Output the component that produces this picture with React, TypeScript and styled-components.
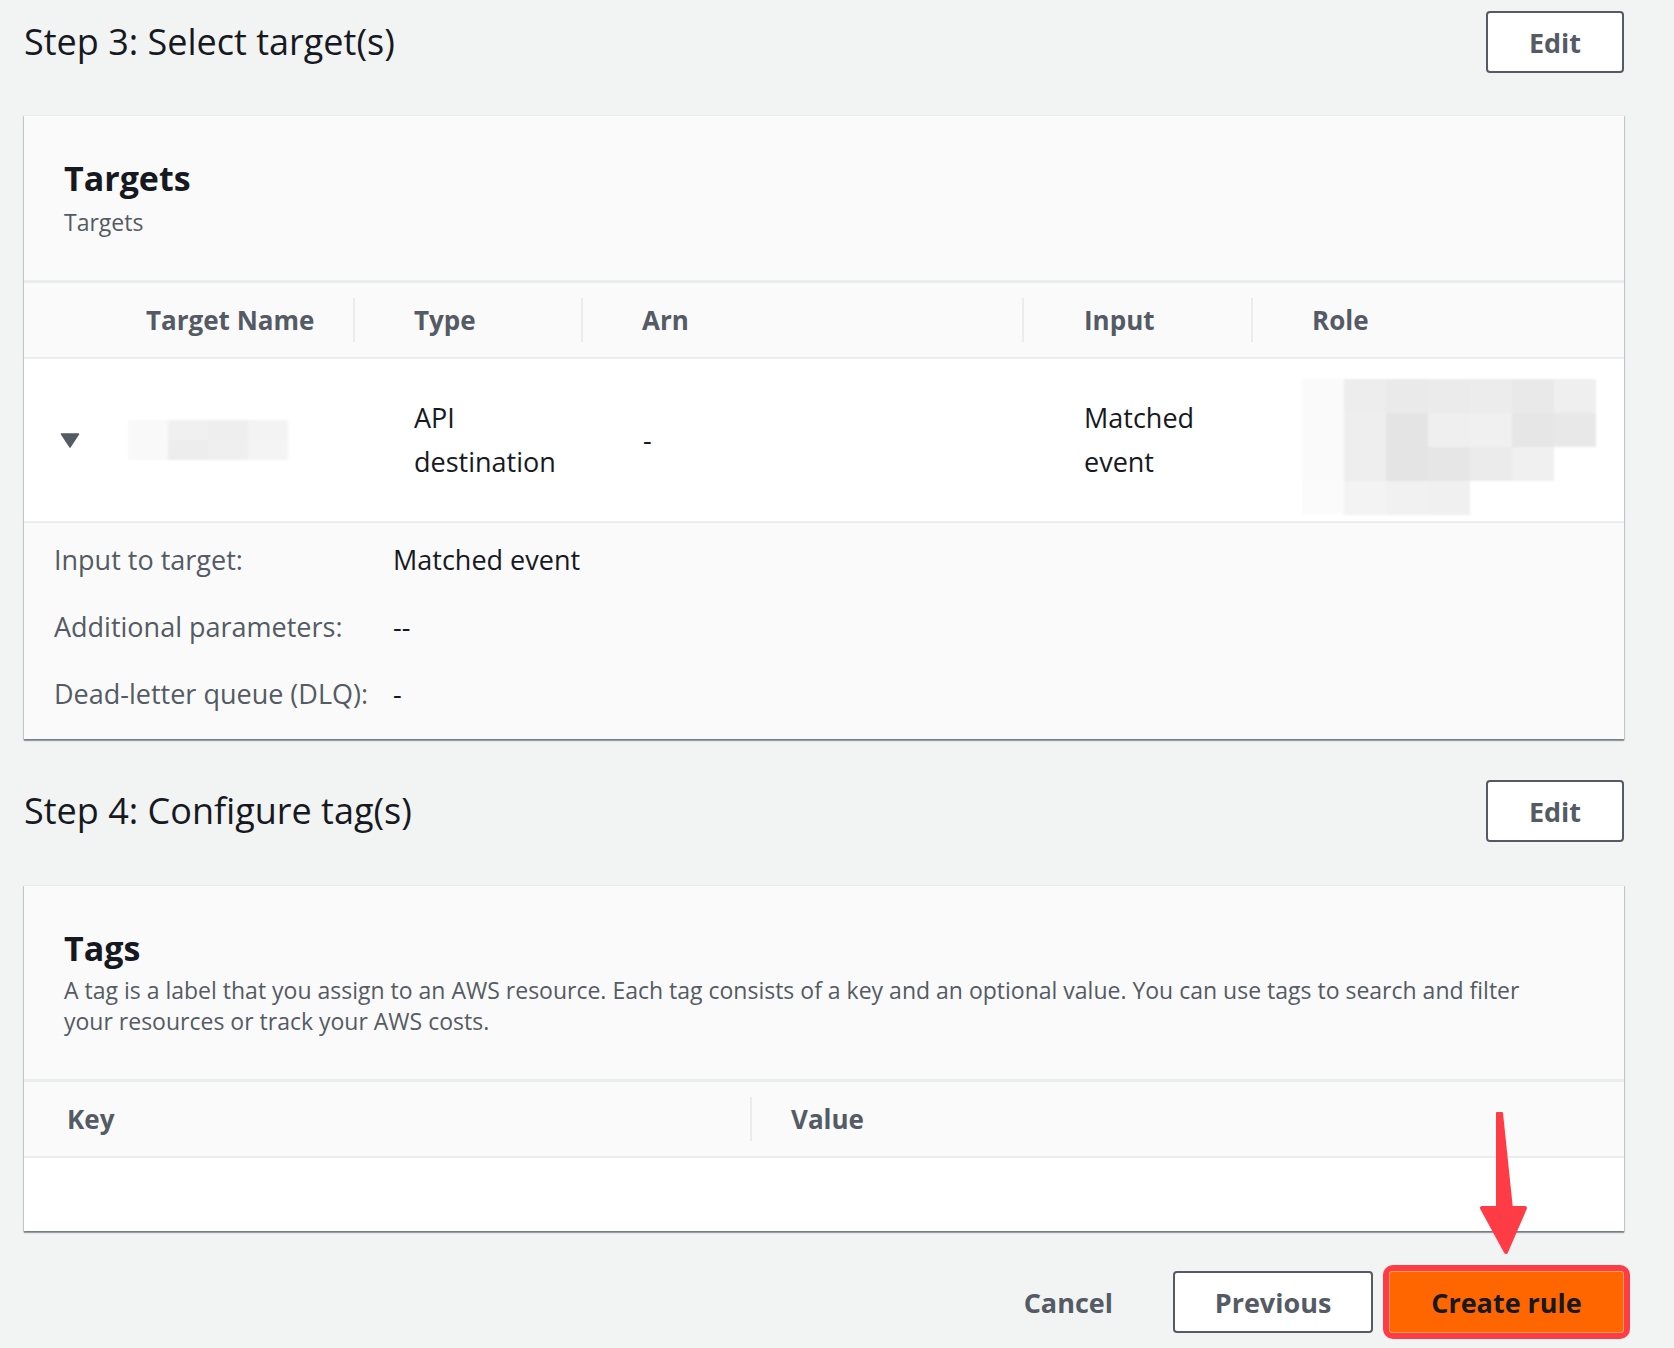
import React from "react";
import styled, { createGlobalStyle } from "styled-components";

const GlobalStyle = createGlobalStyle`
	html, body {
		margin: 0;
		padding: 0;
		background: #f2f3f3;
	}
	body {
		font-family: "Open Sans", "Liberation Sans", Arial, sans-serif;
		color: #16191f;
	}
`;

const Page = styled.div`
	padding: 11px 50px 40px 24px;
	background: #f2f3f3;
	min-height: 1297px;
`;

const StepHeader = styled.div<{ $gap?: number }>`
	display: flex;
	align-items: center;
	justify-content: space-between;
	height: 62px;
	margin-top: ${(p) => p.$gap ?? 0}px;
`;

const StepTitle = styled.h2`
	margin: 0;
	font-size: 36px;
	font-weight: 400;
	line-height: 44px;
	color: #16191f;
`;

const OutlineButton = styled.button<{ $wide?: boolean }>`
	box-sizing: border-box;
	height: 62px;
	min-width: ${(p) => (p.$wide ? "200px" : "138px")};
	padding: 0 30px;
	background: #fff;
	border: 2px solid #545b64;
	border-radius: 4px;
	font-family: inherit;
	font-size: 27px;
	font-weight: 700;
	color: #545b64;
	cursor: pointer;
`;

const Card = styled.section<{ $gap: number }>`
	margin-top: ${(p) => p.$gap}px;
	background: #fafafa;
	border-top: 1px solid #eaeded;
	box-shadow: 0 2px 1px 0 rgba(0, 28, 36, 0.35), 1px 1px 1px 0 rgba(0, 28, 36, 0.15),
		-1px 1px 1px 0 rgba(0, 28, 36, 0.15);
`;

const CardHeader = styled.div`
	padding: 42px 40px 42px;
	border-bottom: 3px solid #eaeded;
`;

const CardTitle = styled.h3`
	margin: 0;
	font-size: 34px;
	font-weight: 700;
	line-height: 40px;
	color: #16191f;
`;

const CardSubtitle = styled.p<{ $gap: number }>`
	margin: ${(p) => p.$gap}px 0 0;
	font-size: 23px;
	line-height: 31px;
	color: #545b64;
	max-width: 1490px;
`;

const TableRow = styled.div<{ $cols: string; $height: number; $bg: string; $last?: boolean }>`
	display: grid;
	grid-template-columns: ${(p) => p.$cols};
	height: ${(p) => p.$height}px;
	background: ${(p) => p.$bg};
	border-bottom: ${(p) => (p.$last ? "none" : "2px solid #eaeded")};
`;

const HeaderCell = styled.div`
	display: flex;
	align-items: center;
`;

const HeaderLabel = styled.div<{ $pad: number; $divider?: boolean }>`
	display: flex;
	align-items: center;
	height: 44px;
	padding-left: ${(p) => p.$pad}px;
	border-left: 2px solid ${(p) => (p.$divider ? "#eaeded" : "transparent")};
	font-size: 26px;
	font-weight: 700;
	color: #545b64;
`;

const BodyCell = styled.div<{ $pad: number }>`
	display: flex;
	align-items: center;
	padding-left: ${(p) => p.$pad + 2}px;
	font-size: 27px;
	line-height: 44px;
	color: #16191f;
`;

const Toggle = styled.svg`
	width: 20px;
	height: 15px;
	margin-right: 48px;
	flex: none;
`;

const Mosaic = styled.div<{ $cols: number; $w: number; $h: number; $shift?: number }>`
	display: grid;
	grid-template-columns: repeat(${(p) => p.$cols}, ${(p) => p.$w}px);
	grid-auto-rows: ${(p) => p.$h}px;
	margin-top: ${(p) => p.$shift ?? 0}px;
	filter: blur(1px);
`;

const Tile = styled.div<{ $c: string }>`
	background: ${(p) => p.$c};
`;

const Details = styled.dl`
	display: grid;
	grid-template-columns: 339px 1fr;
	grid-auto-rows: 67px;
	align-items: center;
	margin: 0;
	padding: 3px 30px 12px;
	font-size: 27px;
`;

const DetailLabel = styled.dt`
	color: #545b64;
`;

const DetailValue = styled.dd`
	margin: 0;
	color: #16191f;
`;

const Footer = styled.div`
	display: flex;
	justify-content: flex-end;
	align-items: center;
	margin-top: 40px;
`;

const LinkButton = styled.button`
	background: none;
	border: none;
	padding: 0 30px;
	margin-right: 30px;
	font-family: inherit;
	font-size: 27px;
	font-weight: 700;
	color: #545b64;
	cursor: pointer;
`;

const Highlight = styled.div`
	position: relative;
	margin: -6px -6px -6px 10px;
	border: 6px solid #ff3b45;
	border-radius: 10px;
	display: flex;
`;

const PrimaryButton = styled.button`
	box-sizing: border-box;
	height: 62px;
	width: 235px;
	background: #ff6600;
	border: 1px solid #ff9d5c;
	border-radius: 3px;
	font-family: inherit;
	font-size: 27px;
	font-weight: 700;
	color: #16191f;
	cursor: pointer;
`;

const Arrow = styled.svg`
	position: absolute;
	left: 86px;
	top: -162px;
	width: 52px;
	height: 150px;
`;

const targetCols = "329px 228px 441px 229px 1fr";
const targetHeaders: [string, number][] = [
	["Target Name", 120],
	["Type", 59],
	["Arn", 59],
	["Input", 60],
	["Role", 59],
];

const nameTiles = [
	"#f9f9f9", "#f0f0f0", "#eeeeee", "#f3f3f3",
	"#f9f9f9", "#ededed", "#efefef", "#f4f4f4",
];

const roleTiles = [
	"#fafafa", "#ededed", "#eaeaea", "#ebebeb", "#ececec", "#e9e9e9", "#efefef",
	"#fafafa", "#eeeeee", "#e4e4e4", "#efefef", "#f0f0f0", "#e6e6e6", "#e8e8e8",
	"#fafafa", "#eeeeee", "#e4e4e4", "#e6e6e6", "#ebebeb", "#f0f0f0", "transparent",
	"#fbfbfb", "#f3f3f3", "#f1f1f1", "#f0f0f0", "transparent", "transparent", "transparent",
];

export default function App() {
	return (
		<>
			<GlobalStyle />
			<Page>
				<StepHeader>
					<StepTitle>Step 3: Select target(s)</StepTitle>
					<OutlineButton>Edit</OutlineButton>
				</StepHeader>

				<Card $gap={42}>
					<CardHeader>
						<CardTitle>Targets</CardTitle>
						<CardSubtitle $gap={9}>Targets</CardSubtitle>
					</CardHeader>
					<TableRow $cols={targetCols} $height={74} $bg="#fafafa">
						{targetHeaders.map(([label, pad], i) => (
							<HeaderCell key={label}>
								<HeaderLabel $pad={pad} $divider={i > 0}>
									{label}
								</HeaderLabel>
							</HeaderCell>
						))}
					</TableRow>
					<TableRow $cols={targetCols} $height={162} $bg="#ffffff">
						<BodyCell $pad={34}>
							<Toggle viewBox="0 0 20 15">
								<path d="M1.5 1 H18.5 L10 14 Z" fill="#545b64" stroke="#545b64" strokeWidth="1.5" strokeLinejoin="round" />
							</Toggle>
							<Mosaic $cols={4} $w={40} $h={20}>
								{nameTiles.map((c, i) => (
									<Tile key={i} $c={c} />
								))}
							</Mosaic>
						</BodyCell>
						<BodyCell $pad={59}>
							API
							<br />
							destination
						</BodyCell>
						<BodyCell $pad={60}>-</BodyCell>
						<BodyCell $pad={60}>
							Matched
							<br />
							event
						</BodyCell>
						<BodyCell $pad={49}>
							<Mosaic $cols={7} $w={42} $h={34} $shift={14}>
								{roleTiles.map((c, i) => (
									<Tile key={i} $c={c} />
								))}
							</Mosaic>
						</BodyCell>
					</TableRow>
					<Details>
						<DetailLabel>Input to target:</DetailLabel>
						<DetailValue>Matched event</DetailValue>
						<DetailLabel>Additional parameters:</DetailLabel>
						<DetailValue>--</DetailValue>
						<DetailLabel>Dead-letter queue (DLQ):</DetailLabel>
						<DetailValue>-</DetailValue>
					</Details>
				</Card>

				<StepHeader $gap={41}>
					<StepTitle>Step 4: Configure tag(s)</StepTitle>
					<OutlineButton>Edit</OutlineButton>
				</StepHeader>

				<Card $gap={43}>
					<CardHeader>
						<CardTitle>Tags</CardTitle>
						<CardSubtitle $gap={7}>
							A tag is a label that you assign to an AWS resource. Each tag consists of a key and an
							optional value. You can use tags to search and filter your resources or track your AWS
							costs.
						</CardSubtitle>
					</CardHeader>
					<TableRow $cols="726px 1fr" $height={74} $bg="#fafafa">
						<HeaderCell>
							<HeaderLabel $pad={41}>Key</HeaderLabel>
						</HeaderCell>
						<HeaderCell>
							<HeaderLabel $pad={39} $divider>
								Value
							</HeaderLabel>
						</HeaderCell>
					</TableRow>
					<TableRow $cols="1fr" $height={73} $bg="#ffffff" $last />
				</Card>

				<Footer>
					<LinkButton>Cancel</LinkButton>
					<OutlineButton $wide>Previous</OutlineButton>
					<Highlight>
						<Arrow viewBox="0 0 52 150">
							<path d="M22 4 L27 4 L37 100 L22 100 Z" fill="#ff3b45" stroke="#ff3b45" strokeWidth="2" strokeLinejoin="round" />
							<path d="M7 99 L50 99 L31 143 Z" fill="#ff3b45" stroke="#ff3b45" strokeWidth="4" strokeLinejoin="round" />
						</Arrow>
						<PrimaryButton>Create rule</PrimaryButton>
					</Highlight>
				</Footer>
			</Page>
		</>
	);
}
